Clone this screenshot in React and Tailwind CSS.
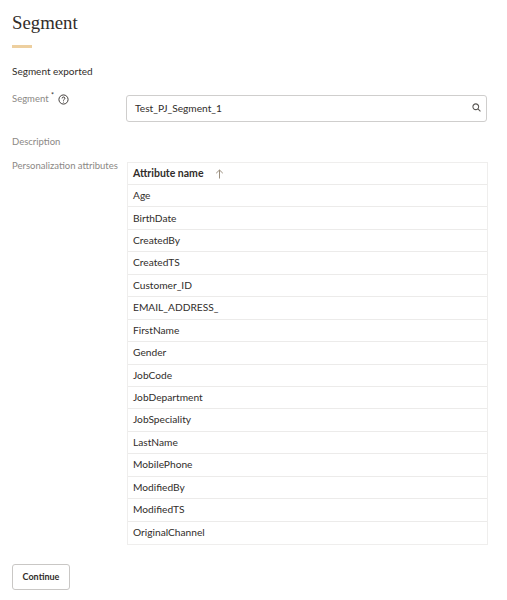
import React from 'react';

const attributes = [
  'Age',
  'BirthDate',
  'CreatedBy',
  'CreatedTS',
  'Customer_ID',
  'EMAIL_ADDRESS_',
  'FirstName',
  'Gender',
  'JobCode',
  'JobDepartment',
  'JobSpeciality',
  'LastName',
  'MobilePhone',
  'ModifiedBy',
  'ModifiedTS',
  'OriginalChannel',
];

export default function App() {
  return (
    <div className="w-[507px] h-[600px] overflow-hidden bg-white px-3 pt-[11px] font-['Lato','Open_Sans',sans-serif] text-[#312d2a]">
      {/* Title */}
      <h1 className="font-['Liberation_Serif',serif] text-[18.8px] leading-6">Segment</h1>
      <div className="mt-[10px] h-[3px] w-5 bg-[#edcf9f]"></div>

      <p className="mt-[15px] text-[10px] leading-4">Segment exported</p>

      {/* Segment field */}
      <div className="mt-[16px] flex">
        <div className="w-[114px] flex items-start gap-1 h-[18px] -mt-[4px] text-[9.5px] leading-4 text-[#8b8885]">
          <span>Segment <sup className="text-[#312d2a]">*</sup></span>
          <svg className="mt-[3px]" width="11" height="11" viewBox="0 0 12 12" fill="none" stroke="#312d2a" strokeWidth="1">
            <circle cx="6" cy="6" r="5" />
            <path d="M4.5 4.8a1.5 1.5 0 1 1 2.2 1.3c-.5.3-.7.6-.7 1.1" />
            <path d="M6 8.4v.9" />
          </svg>
        </div>
        <div className="flex h-[27px] w-[361px] items-center justify-between rounded-[3px] border border-[#cfcecd] pl-2 pr-1">
          <span className="text-[10.2px]">Test_PJ_Segment_1</span>
          <svg className="mb-[2px] mr-[1px]" width="9" height="9" viewBox="0 0 10 10" fill="none" stroke="#5a5754" strokeWidth="1.2">
            <circle cx="4.2" cy="4.2" r="3.2" />
            <path d="M6.6 6.6 9.4 9.4" />
          </svg>
        </div>
      </div>

      <div className="mt-[12px] h-4 text-[9.5px] leading-4 text-[#8b8885]">Description</div>

      {/* Attributes */}
      <div className="mt-[8px] flex items-start">
        <div className="w-[115px] text-[9.5px] leading-4 text-[#8b8885]">Personalization attributes</div>
        <div className="mt-[4px] w-[361px] border border-[#efeeed] text-[10.2px]">
          <div className="flex h-[22px] items-center gap-[11px] border-b border-[#ecebea] px-[5px] text-[10.5px] font-bold">
            <span>Attribute name</span>
            <svg width="9" height="10" viewBox="0 0 9 10" fill="none" stroke="#9b8f7e" strokeWidth="1">
              <path d="M4.5 9.5V1M1.2 4.2 4.5 1l3.3 3.2" />
            </svg>
          </div>
          {attributes.map((name, i) => (
            <div
              key={name}
              className={`flex h-[22.45px] items-center px-[5px] ${i < attributes.length - 1 ? 'border-b border-[#ecebea]' : ''}`}
            >
              {name}
            </div>
          ))}
        </div>
      </div>

      <button className="mt-[19px] block h-[26px] w-[58px] rounded-[3px] border border-[#c9c7c5] text-[9px] font-bold">
        Continue
      </button>
    </div>
  );
}
